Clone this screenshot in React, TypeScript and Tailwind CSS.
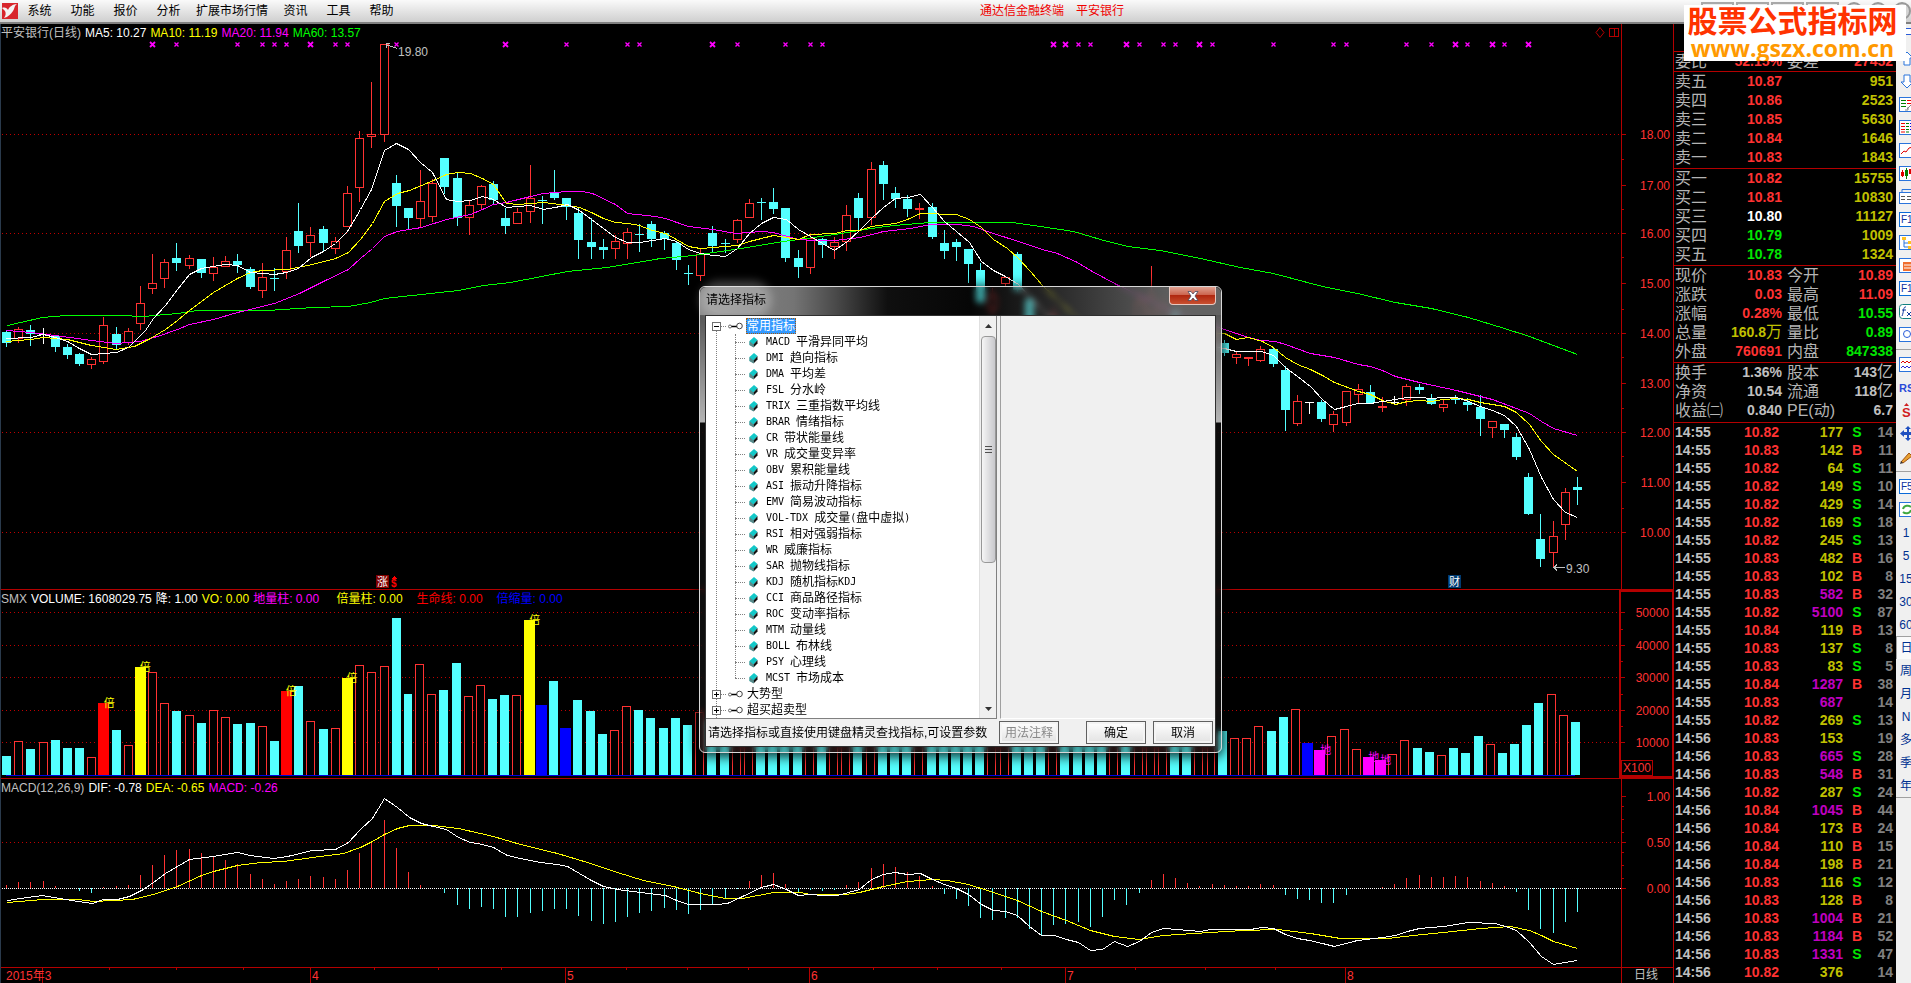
import React from "react";

type Candle = [string, number, number, number, number];

const cx = (i: number) => Math.round(6 + i * 12.178);

// kind, high, body top, body bottom, low
const candles: Candle[] = [
  ["D", 330, 332, 343, 346], ["U", 327, 329, 338, 342], ["D", 325, 330, 334, 345], ["W", 328, 334, 334, 343],
  ["D", 335, 336, 347, 351], ["D", 344, 347, 355, 358], ["D", 353, 354, 364, 365], ["U", 357, 359, 364, 368],
  ["U", 317, 325, 361, 363], ["D", 327, 334, 345, 348], ["U", 328, 331, 342, 344], ["U", 286, 303, 323, 329],
  ["U", 254, 283, 288, 293], ["U", 259, 262, 278, 287], ["D", 243, 258, 263, 270], ["U", 255, 258, 265, 268],
  ["D", 259, 259, 273, 277], ["U", 257, 267, 273, 280], ["U", 256, 261, 266, 266], ["D", 254, 261, 265, 272],
  ["D", 267, 269, 287, 288], ["U", 263, 277, 290, 297], ["D", 268, 278, 278, 290], ["U", 237, 250, 271, 278],
  ["D", 203, 231, 246, 252], ["U", 227, 235, 242, 256], ["D", 226, 229, 243, 251], ["U", 237, 241, 248, 253],
  ["U", 186, 193, 226, 226], ["U", 131, 138, 187, 201], ["U", 82, 134, 136, 147], ["U", 44, 44, 134, 141],
  ["D", 175, 183, 206, 226], ["D", 208, 208, 218, 228], ["U", 170, 201, 218, 227], ["U", 179, 183, 216, 221],
  ["D", 158, 158, 187, 193], ["D", 173, 178, 218, 225], ["U", 200, 205, 217, 234], ["U", 185, 186, 204, 208],
  ["D", 181, 184, 200, 204], ["D", 208, 218, 226, 233], ["U", 208, 212, 223, 223], ["U", 165, 198, 211, 222],
  ["D", 196, 200, 200, 223], ["D", 170, 192, 198, 199], ["D", 198, 198, 207, 219], ["D", 208, 213, 240, 258],
  ["D", 218, 242, 247, 258], ["D", 239, 247, 250, 258], ["U", 235, 241, 248, 258], ["U", 228, 232, 243, 258],
  ["D", 224, 234, 234, 251], ["D", 221, 224, 239, 246], ["D", 231, 233, 239, 249], ["D", 241, 243, 260, 269],
  ["D", 265, 273, 273, 284], ["U", 248, 254, 275, 280], ["D", 226, 233, 246, 252], ["D", 239, 243, 243, 252],
  ["U", 219, 220, 239, 242], ["U", 199, 203, 217, 217], ["D", 198, 202, 202, 219], ["D", 188, 202, 209, 213],
  ["D", 208, 208, 258, 261], ["D", 250, 258, 267, 277], ["U", 234, 238, 267, 273], ["D", 238, 239, 245, 257],
  ["U", 237, 242, 246, 258], ["U", 205, 215, 241, 250], ["D", 193, 198, 218, 229], ["U", 162, 169, 217, 224],
  ["D", 161, 165, 184, 199], ["D", 187, 193, 199, 207], ["D", 195, 199, 209, 216], ["U", 203, 208, 209, 218],
  ["D", 203, 207, 237, 238], ["D", 230, 243, 251, 258], ["D", 239, 242, 247, 260], ["D", 249, 249, 264, 282],
  ["D", 263, 270, 302, 304], ["U", 288, 296, 308, 316], ["U", 277, 277, 283, 285], ["D", 252, 254, 290, 292],
  ["D", 296, 299, 330, 340], ["D", 330, 336, 362, 370], ["U", 308, 316, 350, 360], ["D", 318, 326, 340, 352],
  ["D", 336, 342, 366, 372], ["D", 350, 356, 382, 390], ["D", 358, 366, 384, 392], ["U", 330, 344, 370, 380],
  ["D", 320, 330, 348, 360], ["U", 292, 302, 330, 342], ["U", 266, 296, 312, 330], ["U", 296, 306, 320, 330],
  ["D", 306, 310, 330, 336], ["D", 318, 322, 336, 344], ["U", 322, 330, 344, 350], ["U", 326, 332, 346, 352],
  ["D", 340, 343, 353, 355], ["U", 351, 354, 357, 363], ["U", 357, 357, 358, 365], ["U", 346, 349, 360, 361],
  ["D", 347, 349, 364, 366], ["D", 366, 370, 410, 430], ["U", 395, 401, 423, 425], ["W", 402, 402, 402, 413],
  ["D", 400, 402, 419, 421], ["U", 411, 414, 424, 431], ["U", 391, 391, 422, 425], ["U", 384, 389, 394, 403],
  ["D", 385, 392, 403, 403], ["U", 397, 406, 407, 411], ["W", 396, 402, 402, 404], ["U", 384, 386, 399, 405],
  ["D", 384, 387, 390, 393], ["D", 394, 399, 404, 404], ["U", 400, 404, 407, 411], ["D", 395, 398, 400, 403],
  ["D", 398, 402, 405, 410], ["D", 395, 407, 419, 435], ["U", 421, 421, 427, 437], ["D", 424, 424, 430, 437],
  ["D", 433, 437, 457, 459], ["D", 473, 477, 514, 514], ["D", 514, 539, 559, 566], ["U", 521, 536, 552, 566],
  ["U", 488, 492, 524, 539], ["D", 477, 487, 490, 504],
];

const volumeTops =
  "D756 U741 D749 U742 D740 D748 D748 U757 R703 D730 U745 Y667 U672 U703 D711 U715 D723 U710 U717 D724 D723 U726 D741 R691 D686 U721 D729 U728 Y678 U665 U672 U666 D618 D694 U664 U694 D690 D663 U696 U685 D699 D695 U695 Y620 B705 D681 B728 D700 D711 D734 U730 U706 D710 D718 D728 D718 D725 U712 D720 D728 U716 U712 D722 D718 D710 D720 U716 D722 U718 U708 D702 U690 D700 D712 D716 U722 D704 D716 D722 D718 D708 U712 U716 D704 D716 D708 U698 D702 D706 D712 D704 U700 D712 U708 U704 U712 D720 D726 U728 U734 D731 U738 U738 U726 D731 D717 U709 B743 M750 U736 U729 U749 M757 M760 U754 U740 D748 D752 U755 D748 D753 D736 U744 D753 D744 D725 D703 U694 U715 D722".split(
    " "
  );

const macdBars = [
  3, 6, 6, 7, 2, 0, -3, -5, 1, 2, 3, 13, 23, 33, 38, 39, 35, 31, 28, 24, 14, 9, 4, 7, 9, 12, 11, 9, 18, 35, 45, 68, 40, 16, 3,
  0, -5, -17, -21, -19, -21, -29, -29, -25, -23, -21, -21, -28, -33, -36, -34, -29, -25, -23, -20, -22, -26, -22, -16, -11,
  -1, 7, 13, 15, 4, -4, -2, -3, -2, 3, 6, 20, 24, 21, 16, 12, 2, -6, -11, -18, -30, -32, -30, -30, -41, -47, -37, -36, -34,
  -39, -29, -12, -17, -5, 8, 14, 10, 5, 2, 4, 3, 2, 2, 4, 3, -7, -11, -12, -15, -15, -7, 0, 0, 1, 4, 10, 13, 11, 11, 12, 11,
  7, 5, 2, -4, -22, -41, -45, -34, -24,
];

const ma5 =
  "6,338 30,337 43,334 55,337 67,341 79,348 91,354 104,353 116,352 128,347 145,330 153,318 165,305 177,289 189,274 201,268 213,266 225,264 237,265 250,272 262,273 274,274 286,272 298,268 311,257 323,251 335,243 347,231 360,209 371,189 384,150 396,143 408,149 420,162 432,172 446,199 457,201 470,200 482,196 493,199 506,207 518,206 530,205 543,209 555,207 567,204 579,210 591,219 603,228 615,237 627,242 639,242 652,240 665,238 676,241 688,249 700,253 713,255 725,256 737,248 749,233 761,223 773,217 786,219 798,229 810,236 822,243 834,250 847,241 859,230 871,218 883,207 895,198 907,197 920,194 932,207 944,221 956,231 969,242 981,261 993,270 1005,276 1018,284 1042,310 1100,365 1150,335 1224,348 1236,351 1261,351 1273,355 1285,367 1297,376 1310,386 1322,399 1334,409 1346,406 1357,403 1370,403 1382,401 1395,399 1407,397 1419,397 1431,398 1443,397 1456,397 1468,401 1480,406 1492,410 1504,415 1516,426 1529,449 1541,477 1553,499 1565,512 1577,517";
const ma10 =
  "6,341 30,339 43,337 67,339 91,345 116,349 134,346 150,338 165,329 177,320 189,310 201,301 213,292 225,285 237,278 250,272 262,270 287,269 312,264 335,258 348,252 360,239 372,223 384,201 397,193 409,190 421,185 433,180 446,174 458,172 470,173 482,178 493,184 506,203 518,204 530,203 543,202 567,205 579,207 591,212 603,218 615,222 627,223 639,225 652,230 665,233 676,239 688,246 700,248 713,247 737,245 749,241 773,235 786,237 798,239 810,234 834,233 847,230 859,230 871,226 895,223 907,219 920,213 956,214 969,219 981,227 993,239 1007,248 1018,258 1030,271 1042,285 1090,330 1224,333 1236,339 1248,337 1262,341 1273,347 1285,357 1297,364 1310,369 1322,375 1334,382 1358,391 1370,394 1382,400 1395,404 1407,401 1419,400 1431,401 1443,399 1456,398 1468,399 1480,402 1504,406 1516,412 1529,424 1541,441 1553,454 1577,471";
const ma20 =
  "6,330 30,332 55,335 91,340 116,343 140,341 160,335 177,329 189,324 213,319 237,312 274,303 299,293 323,281 348,269 360,258 372,248 384,236 397,231 421,227 446,219 470,214 482,209 493,204 506,202 530,196 543,193 567,191 582,191 592,193 615,204 627,213 655,216 665,218 688,226 713,229 735,233 761,231 773,232 798,239 813,240 834,240 860,237 883,231 910,228 930,224 957,224 973,226 993,233 1018,241 1042,249 1057,253 1077,262 1090,270 1116,284 1170,310 1224,329 1248,337 1261,340 1275,341 1285,344 1310,353 1334,357 1358,364 1370,366 1382,370 1395,376 1419,382 1456,390 1480,396 1492,399 1516,408 1529,413 1541,421 1553,428 1577,435";
const ma60 =
  "7,325 20,322 42,317 65,315 120,315 143,316 177,313 197,310 267,310 313,307 348,306 370,302 384,298 430,293 458,290 483,285 510,282 567,271 607,267 660,258 693,255 747,247 783,241 813,237 834,234 859,230 871,228 893,225 930,222 1012,222 1040,226 1073,231 1100,239 1127,246 1160,250 1200,258 1240,267 1273,273 1322,286 1357,293 1395,302 1431,308 1468,317 1504,328 1529,336 1553,345 1577,354";
const dif =
  "7,900 27,897 42,895 65,899 78,901 92,903 103,899 117,899 129,896 143,889 153,882 165,873 177,866 189,859 213,856 237,852 250,855 273,858 287,856 312,850 335,849 348,842 360,829 372,818 384,798 397,807 409,817 421,823 433,826 446,829 458,837 470,842 482,844 493,847 507,855 520,858 540,862 557,864 567,866 579,873 591,880 603,886 617,889 640,892 665,895 676,900 688,904 717,904 727,903 740,897 761,887 773,884 786,889 798,895 810,894 823,895 837,895 859,889 871,879 883,874 895,872 907,874 920,873 932,879 944,884 956,888 968,894 981,904 993,910 1005,911 1017,915 1029,926 1041,935 1054,935 1066,939 1078,942 1090,950 1102,949 1114,941 1127,946 1139,941 1151,932 1163,928 1177,929 1200,931 1210,929 1250,929 1262,927 1273,928 1285,934 1297,938 1309,940 1322,943 1334,946 1357,940 1382,937 1395,935 1407,931 1419,928 1443,926 1468,922 1495,923 1508,927 1516,930 1529,942 1541,956 1553,964 1577,960";
const dea =
  "7,902 42,899 78,899 93,901 132,899 153,894 177,886 201,875 213,871 237,865 260,862 283,861 312,857 343,853 360,847 372,841 384,834 397,828 409,825 433,825 458,828 480,833 493,836 520,844 557,853 587,862 617,872 643,880 673,886 700,893 725,898 742,898 773,892 800,892 810,894 845,894 859,892 883,886 907,881 932,879 947,880 968,884 993,892 1017,900 1041,911 1066,920 1090,930 1114,936 1139,939 1163,935 1193,933 1243,930 1277,929 1310,933 1340,938 1387,938 1413,935 1443,932 1480,928 1510,926 1529,930 1541,935 1553,941 1577,948";

const signals = [
  12, 14, 19, 21, 22, 23, 25, 27, 28, 32, 41, 46, 51, 52, 58, 60, 64, 66, 67, 86, 87, 88, 89, 92, 93, 95, 96, 98, 99, 104, 109,
  110, 115, 117, 119, 120, 122, 123, 125,
];
const strongSignals = [12, 25, 41, 58, 86, 87, 92, 98, 119, 122, 125];

const RED = "#ff3232";
const CYAN = "#54ffff";
const LINE = "#b40000";
const chartFont = "'Liberation Sans','Noto Sans CJK SC',sans-serif";

function Grid({ ys }: { ys: number[] }) {
  return (
    <>
      {ys.map((y) => (
        <line key={y} x1={2} x2={1621} y1={y + 0.5} y2={y + 0.5} stroke="#c00000" strokeDasharray="1 3" />
      ))}
    </>
  );
}

function Curve({ points, color }: { points: string; color: string }) {
  return <polyline points={points} transform="translate(0.5 0.5)" fill="none" stroke={color} strokeWidth={1} />;
}

function PriceChart() {
  return (
    <svg viewBox="1 41 1620 548" preserveAspectRatio="xMinYMin meet" className="block h-[548px] w-full" shapeRendering="crispEdges" fontFamily={chartFont}>
      <Grid ys={[134, 233, 333, 432, 532]} />
      {signals.map((i) => {
        const s = strongSignals.includes(i) ? 2.5 : 2;
        const x = cx(i) + 0.5;
        return (
          <path
            key={i}
            d={`M${x - s} ${44.5 - s}L${x + s} ${44.5 + s}M${x + s} ${44.5 - s}L${x - s} ${44.5 + s}`}
            stroke="#ff00ff"
            strokeWidth={strongSignals.includes(i) ? 1.8 : 1.3}
            shapeRendering="auto"
          />
        );
      })}
      {candles.map(([kind, high, top, bottom, low], i) => {
        const x = cx(i);
        const color = kind === "U" ? RED : kind === "D" ? CYAN : "#ffffff";
        const flat = bottom - top < 2;
        return (
          <g key={i}>
            <line x1={x + 0.5} x2={x + 0.5} y1={high} y2={low + 1} stroke={color} />
            {kind === "U" && !flat ? (
              <rect x={x - 3.5} y={top + 0.5} width={8} height={bottom - top} fill="#000" stroke={color} />
            ) : (
              <rect x={x - 4} y={top} width={9} height={Math.max(1, bottom - top + (kind === "U" ? 1 : 0))} fill={color} />
            )}
          </g>
        );
      })}
      <Curve points={ma60} color="#00ff00" />
      <Curve points={ma20} color="#ff00ff" />
      <Curve points={ma10} color="#ffff00" />
      <Curve points={ma5} color="#ffffff" />
      <g stroke="#c0c0c0" fill="none">
        <path d="M397 48.5L386 44.5M390 43.5H386V47.5" />
        <path d="M1565 567.5H1554M1557 564.5L1554 567.5L1557 570.5" />
      </g>
      <g fill="#c0c0c0" fontSize={12}>
        <text x={398} y={56}>19.80</text>
        <text x={1566} y={573}>9.30</text>
      </g>
      <rect x={376} y={575} width={13} height={13} fill="#800000" />
      <text x={377} y={586} fontSize={11} fill="#fff">涨</text>
      <text x={391} y={587} fontSize={10} fontWeight={700} fill="#ff0000">$</text>
      <path d="M394 576L397 579H391Z" fill="#ff0000" />
      <rect x={1448} y={575} width={13} height={13} fill="#003a70" />
      <text x={1449} y={586} fontSize={11} fill="#fff">财</text>
    </svg>
  );
}

const special: Record<string, string> = { R: "#ff0000", Y: "#ffff00", B: "#0000ff", M: "#ff00ff" };

function VolumeChart() {
  return (
    <svg viewBox="1 607 1620 171" preserveAspectRatio="xMinYMin meet" className="block h-[171px] w-full" shapeRendering="crispEdges" fontFamily={chartFont}>
      <Grid ys={[612, 645, 677, 710, 742]} />
      {volumeTops.map((v, i) => {
        const kind = v[0];
        const top = Number(v.slice(1));
        const x = cx(i);
        if (kind === "U") return <path key={i} d={`M${x - 3.5} 775V${top + 0.5}H${x + 4.5}V775`} fill="#000" stroke={RED} />;
        if (kind === "D") return <rect key={i} x={x - 4} y={top} width={9} height={775 - top} fill={CYAN} />;
        return <rect key={i} x={x - 5} y={top} width={11} height={775 - top} fill={special[kind]} />;
      })}
      <line x1={6} x2={1577} y1={775.5} y2={775.5} stroke="#0000e0" />
      <g fill="#ffff00" fontSize={11}>
        <text x={104} y={707}>倍</text>
        <text x={140} y={671}>倍</text>
        <text x={286} y={695}>倍</text>
        <text x={347} y={682}>倍</text>
        <text x={530} y={624}>倍</text>
      </g>
      <g fill="#ff00ff" fontSize={11}>
        <text x={1322} y={754}>地</text>
        <text x={1370} y={761}>地</text>
        <text x={1382} y={764}>地</text>
      </g>
    </svg>
  );
}

function MacdChart() {
  return (
    <svg viewBox="1 796 1620 171" preserveAspectRatio="xMinYMin meet" className="block h-[171px] w-full" shapeRendering="crispEdges">
      <Grid ys={[842]} />
      <line x1={2} x2={1621} y1={888.5} y2={888.5} stroke="#fff" strokeDasharray="1 1" />
      {macdBars.map((h, i) =>
        h === 0 ? null : (
          <line key={i} x1={cx(i) + 0.5} x2={cx(i) + 0.5} y1={888} y2={888 - h} stroke={h > 0 ? RED : CYAN} />
        )
      )}
      <Curve points={dea} color="#ffff00" />
      <Curve points={dif} color="#ffffff" />
    </svg>
  );
}

function Axis({ top, height, labels, minor }: { top: number; height: number; labels: [string, number][]; minor: number[] }) {
  return (
    <svg viewBox={`1622 ${top} 51 ${height}`} className="block h-full w-[51px]" shapeRendering="crispEdges" fontFamily={chartFont}>
      {labels.map(([t, y]) => (
        <g key={t}>
          <line x1={1622} x2={1626} y1={y + 0.5} y2={y + 0.5} stroke={LINE} />
          <text x={1670} y={y + 5} fontSize={12} textAnchor="end" fill={RED}>
            {t}
          </text>
        </g>
      ))}
      {minor.map((y) => (
        <line key={y} x1={1622} x2={1624} y1={y + 0.5} y2={y + 0.5} stroke={LINE} />
      ))}
    </svg>
  );
}

function DateAxis() {
  const months: [string, number][] = [["4", 310], ["5", 565], ["6", 809], ["7", 1065], ["8", 1345]];
  return (
    <svg viewBox="1 968 1620 15" preserveAspectRatio="xMinYMin meet" className="block h-[15px] w-full" shapeRendering="crispEdges" fontFamily={chartFont}>
      {[109, 176, 243, 374, 438, 501, 626, 687, 748, 873, 937, 1001, 1135, 1205, 1275].map((x) => (
        <line key={x} x1={x + 0.5} x2={x + 0.5} y1={968} y2={970} stroke={LINE} />
      ))}
      <line x1={42.5} x2={42.5} y1={968} y2={983} stroke={LINE} />
      <text x={6} y={980} fontSize={12} fill={RED}>2015年3</text>
      {months.map(([m, x]) => (
        <g key={m}>
          <line x1={x + 0.5} x2={x + 0.5} y1={968} y2={983} stroke={LINE} />
          <text x={x + 2} y={980} fontSize={12} fill={RED}>{m}</text>
        </g>
      ))}
    </svg>
  );
}

function Logo() {
  return (
    <svg viewBox="0 0 16 16" className="h-4 w-4">
      <rect width="16" height="16" fill="#d8262c" />
      <path d="M0 5C3 4 5 5 6 7C7 4 11 1 15 1C12 3 13 5 11 8C9 11 6 14 2 15C4 12 4 10 3 8C2 7 1 6 0 5Z" fill="#f4f4f4" />
    </svg>
  );
}

const menus = ["系统", "功能", "报价", "分析", "扩展市场行情", "资讯", "工具", "帮助"];

function MenuBar() {
  return (
    <header className="flex h-6 items-center border-b-2 border-[#808080] bg-gradient-to-b from-[#fafafa] to-[#cfcfcf] pl-0.5 text-xs text-black">
      <Logo />
      <nav className="flex">
        {menus.map((m) => (
          <button key={m} className="min-w-[43px] px-1.5 text-center leading-5">
            {m}
          </button>
        ))}
      </nav>
      <div className="flex flex-1 justify-center gap-3 text-[#f00000]">
        <span>通达信金融终端</span>
        <span>平安银行</span>
      </div>
      <div className="flex w-[210px] gap-0.5 self-start pt-0.5">
        {[0, 1, 2, 3].map((k) => (
          <span key={k} className="h-4 w-[35px] border-2 border-[#a8a8a8] bg-[#ececec]" />
        ))}
        {[0, 1, 2].map((k) => (
          <span key={k} className="ml-1 h-[18px] w-[18px] shrink-0 rounded-full border-2 border-[#999] bg-[#d4d4d4]" />
        ))}
      </div>
    </header>
  );
}

function Legend({ items, children }: { items: [string, string][]; children?: React.ReactNode }) {
  return (
    <div className="flex h-[17px] items-center gap-1 whitespace-pre pr-px text-xs">
      {items.map(([t, c]) => (
        <span key={t} className={c}>
          {t}
        </span>
      ))}
      {children}
    </div>
  );
}

function PaneTools() {
  return (
    <svg viewBox="0 0 25 11" className="ml-auto h-[11px] w-[25px]" fill="none" stroke={LINE}>
      <path d="M5 0.500L9 5.500L5 10.500L1 5.500Z" />
      <path d="M14.500 1.500H23.500V9.500H14.500ZM19.500 1.500V9.500" shapeRendering="crispEdges" />
    </svg>
  );
}

const K = {
  red: "text-[#ff3232]",
  green: "text-[#00e600]",
  yellow: "text-[#c0c000]",
  grey: "text-[#c0c0c0]",
  white: "text-white",
};

type QRow = [string, string, string, string, string, string];
const quoteSections: QRow[][] = [
  [["委比", "52.15%", K.red, "委差", "27452", K.red]],
  [
    ["卖五", "10.87", K.red, "", "951", K.yellow],
    ["卖四", "10.86", K.red, "", "2523", K.yellow],
    ["卖三", "10.85", K.red, "", "5630", K.yellow],
    ["卖二", "10.84", K.red, "", "1646", K.yellow],
    ["卖一", "10.83", K.red, "", "1843", K.yellow],
  ],
  [
    ["买一", "10.82", K.red, "", "15755", K.yellow],
    ["买二", "10.81", K.red, "", "10830", K.yellow],
    ["买三", "10.80", K.white, "", "11127", K.yellow],
    ["买四", "10.79", K.green, "", "1009", K.yellow],
    ["买五", "10.78", K.green, "", "1324", K.yellow],
  ],
  [
    ["现价", "10.83", K.red, "今开", "10.89", K.red],
    ["涨跌", "0.03", K.red, "最高", "11.09", K.red],
    ["涨幅", "0.28%", K.red, "最低", "10.55", K.green],
    ["总量", "160.8万", K.yellow, "量比", "0.89", K.green],
    ["外盘", "760691", K.red, "内盘", "847338", K.green],
  ],
  [
    ["换手", "1.36%", K.grey, "股本", "143亿", K.grey],
    ["净资", "10.54", K.grey, "流通", "118亿", K.grey],
    ["收益㈡", "0.840", K.grey, "PE(动)", "6.7", K.grey],
  ],
];
const sectionHeights = ["h-5", "h-[97px]", "h-[97px]", "h-[97px]", "h-[60px]"];

function Value({ text }: { text: string }) {
  const m = text.match(/^([\d.%]+)(.*)$/);
  return (
    <>
      {m ? m[1] : text}
      {m && m[2] ? <span className="text-base font-normal leading-none">{m[2]}</span> : null}
    </>
  );
}

const trades =
  "55|10.82|177|S|14 55|10.83|142|B|11 55|10.82|64|S|11 55|10.82|149|S|10 55|10.82|429|S|14 55|10.82|169|S|18 55|10.82|245|S|13 55|10.83|482|B|16 55|10.83|102|B|8 55|10.83|582|B|32 55|10.82|5100|S|87 55|10.84|119|B|13 55|10.83|137|S|8 55|10.83|83|S|5 55|10.84|1287|B|38 55|10.83|687||14 55|10.82|269|S|13 56|10.83|153||19 56|10.83|665|S|28 56|10.83|548|B|31 56|10.82|287|S|24 56|10.84|1045|B|44 56|10.84|173|B|24 56|10.84|110|B|15 56|10.84|198|B|21 56|10.83|116|S|12 56|10.83|128|B|8 56|10.83|1004|B|21 56|10.83|1184|B|52 56|10.83|1331|S|47 56|10.82|376||14"
    .split(" ")
    .map((r) => r.split("|"));

function QuotePanel() {
  return (
    <aside className="w-[223px] shrink-0 border-l border-[#b40000] bg-black pt-[27px] text-sm font-bold">
      {quoteSections.map((rows, s) => (
        <div key={s} className={`border-t border-[#b40000] pl-px pr-[3px] ${sectionHeights[s]}`}>
          {rows.map((r) => (
            <div key={r[0]} className="flex h-[19px] items-center whitespace-nowrap leading-[19px]">
              <span className="w-12 text-base font-normal leading-[19px] text-[#b4b4b4]">{r[0]}</span>
              <span className={`w-[59px] text-right ${r[2]}`}>
                <Value text={r[1]} />
              </span>
              <span className="w-12 pl-[5px] text-base font-normal leading-[19px] text-[#b4b4b4]">{r[3]}</span>
              <span className={`flex-1 text-right ${r[5]}`}>
                <Value text={r[4]} />
              </span>
            </div>
          ))}
        </div>
      ))}
      <table className="w-full table-fixed border-collapse border-t border-[#b40000]">
        <colgroup>
          <col className="w-[52px]" />
          <col className="w-[53px]" />
          <col className="w-16" />
          <col className="w-[28px]" />
          <col />
        </colgroup>
        <tbody>
          {trades.map(([t, p, v, d, n], i) => (
            <tr key={i} className="h-[18px] leading-[18px]">
              <td className="p-0 pl-px text-[#c0c0c0]">14:{t}</td>
              <td className="p-0 text-right text-[#ff3232]">{p}</td>
              <td className={`p-0 text-right ${Number(v) >= 500 ? "text-[#c000c0]" : "text-[#c0c000]"}`}>{v}</td>
              <td className={`p-0 text-center ${d === "S" ? "text-[#00e600]" : "text-[#ff3232]"}`}>{d}</td>
              <td className="p-0 pr-[3px] text-right text-[#808080]">{n}</td>
            </tr>
          ))}
        </tbody>
      </table>
    </aside>
  );
}

const frame = <rect x="0.5" y="0.5" width="20" height="14" fill="#fff" stroke="#2a74dc" />;
const toolIcons: [string, React.ReactNode][] = [
  ["窗口", <rect x="0.5" y="0.5" width="20" height="6" fill="#fff" stroke="#2a5cd8" />],
  ["上翻", <path d="M8 1L14 7H11V14H5V7H2Z" fill="#fff" stroke="#2a74dc" />],
  ["下翻", <path d="M8 14L14 8H11V1H5V8H2Z" fill="#fff" stroke="#2a74dc" />],
  ["报表", <>{frame}<path d="M2 3.5H7M2 6.5H7M2 9.5H7" stroke="#008000" /><path d="M8 3.5H13M8 6.5H13" stroke="#f00000" /><path d="M8 12L12 8M6 13H9V10" stroke="#888" fill="none" /></>],
  ["分栏", <>{frame}<path d="M2 3.5H6M2 6.5H6M2 9.5H6M2 12H6" stroke="#f00000" /><path d="M7 3.5H10M7 6.5H10M7 9.5H10M7 12H10" stroke="#008000" /><path d="M11 3.5H14M11 6.5H14M11 9.5H14" stroke="#0000e0" /></>],
  ["分时", <>{frame}<path d="M2 11L5 8L7 9L10 5L14 4" stroke="#e00000" fill="none" /></>],
  ["K线", <>{frame}<path d="M3.5 4V11" stroke="#e00000" /><rect x="2" y="6" width="3" height="4" fill="#e00000" /><path d="M7.500 2V13" stroke="#008000" /><rect x="6" y="4" width="3" height="6" fill="#008000" /><rect x="10" y="3" width="3" height="5" fill="#e00000" /></>],
  ["资料", <><path d="M3 3V0.5H20" stroke="#2a74dc" fill="none" /><rect x="0.5" y="3.500" width="20" height="11" fill="#fff" stroke="#2a74dc" /><path d="M2 7.500H6M8 7.500H12M2 10.500H6M8 10.500H12" stroke="#555" /></>],
  ["F10", "F10"],
  ["结构", <>{frame}<rect x="3" y="2" width="4" height="3" fill="#ffc020" /><path d="M5 5V12H10M5 8H9" stroke="#2a74dc" fill="none" /><rect x="9" y="6" width="4" height="3" fill="#ffc020" /><rect x="9" y="11" width="4" height="3" fill="#ffc020" /></>],
  ["公告", <>{frame}<rect x="4" y="4" width="9" height="9" fill="#f07030" /><path d="M5 7H12M5 10H12M7 2V4" stroke="#fff" /></>],
  ["F12", "F12"],
  ["公式", <><rect x="0.5" y="0.5" width="20" height="14" rx="3" fill="#fff" stroke="#108080" /><path d="M7 3C4 2 5 8 3 12M3 6H7M8 8L12 12M12 8L8 12" stroke="#103aa0" fill="none" /></>],
  ["搜索", <>{frame}<circle cx="8" cy="7" r="3.500" stroke="#2a5cd8" fill="none" /></>],
];
const toolIcons2: [string, React.ReactNode][] = [
  ["波浪", <>{frame}<path d="M2 6L4 4L6 6L8 4L10 6L12 4" stroke="#e00000" fill="none" /><path d="M2 11L4 9L6 11L8 9L10 11L12 9" stroke="#2a2ad8" fill="none" /></>],
  ["RSI", <text x="0" y="12" fontSize="11" fontWeight="700" fill="#2a4ad8">RS</text>],
  ["除权", <><text x="3" y="14" fontSize="13" fontWeight="700" fill="#d02020">S</text><path d="M7.500 0L10 3H5Z" fill="#d02020" /></>],
  ["移动", <path d="M9 0L12 3H10V6H13V4L16 7.500L13 11V9H10V12H12L9 15L6 12H8V9H5V11L1 7.500L5 4V6H8V3H6Z" fill="#2050c0" />],
  ["画线", <><path d="M2 13L10 4L13 7L4 14Z" fill="#e8a030" stroke="#a05010" /><path d="M1 15L2 12L4 14Z" fill="#333" /></>],
];
const toolIcons3: [string, React.ReactNode][] = [
  ["F5", "F5"],
  ["刷新", <>{frame}<path d="M4 7C5 3 10 3 12 5M12 8C11 12 6 12 4 10" stroke="#40a840" strokeWidth="2" fill="none" /></>],
];
const periods = ["1", "5", "15", "30", "60", "日", "周", "月", "N", "多", "季", "年"];

function ToolButton({ name, icon }: { name: string; icon: React.ReactNode }) {
  return (
    <button aria-label={name} className="flex h-[23px] w-6 shrink-0 items-center pl-[3px]">
      {typeof icon === "string" ? (
        <span className="h-[15px] w-[21px] shrink-0 border border-[#0a6ad8] bg-white pl-px text-left text-[10px] leading-[13px] text-[#1030a0]">
          {icon}
        </span>
      ) : (
        <svg viewBox="0 0 21 15" className="h-[15px] w-[21px] shrink-0">
          {icon}
        </svg>
      )}
    </button>
  );
}

function ToolStrip() {
  return (
    <div className="flex w-[15px] shrink-0 flex-col overflow-hidden bg-[#f0f0f0] text-xs text-[#003090]">
      {toolIcons.map(([n, i]) => <ToolButton key={n} name={n} icon={i} />)}
      <div className="my-[3px] h-px bg-[#a0a0a0]" />
      {toolIcons2.map(([n, i]) => <ToolButton key={n} name={n} icon={i} />)}
      <div className="my-[3px] h-px bg-[#a0a0a0]" />
      {toolIcons3.map(([n, i]) => <ToolButton key={n} name={n} icon={i} />)}
      {periods.map((p) => (
        <button
          key={p}
          className={`h-[23px] w-[22px] shrink-0 pr-0.5 text-center leading-[22px] ${p === "日" ? "border-l border-t border-[#a0a0a0] bg-[#fafafa]" : ""}`}
        >
          {p}
        </button>
      ))}
      <div className="h-px bg-[#a0a0a0]" />
    </div>
  );
}

const indicators: [string, string][] = [
  ["MACD", "平滑异同平均"], ["DMI", "趋向指标"], ["DMA", "平均差"], ["FSL", "分水岭"], ["TRIX", "三重指数平均线"],
  ["BRAR", "情绪指标"], ["CR", "带状能量线"], ["VR", "成交量变异率"], ["OBV", "累积能量线"], ["ASI", "振动升降指标"],
  ["EMV", "简易波动指标"], ["VOL-TDX", "成交量(盘中虚拟)"], ["RSI", "相对强弱指标"], ["WR", "威廉指标"], ["SAR", "抛物线指标"],
  ["KDJ", "随机指标KDJ"], ["CCI", "商品路径指标"], ["ROC", "变动率指标"], ["MTM", "动量线"], ["BOLL", "布林线"],
  ["PSY", "心理线"], ["MCST", "市场成本"],
];

function HalfWidth({ text }: { text: string }) {
  return (
    <>
      {text.split(/([ -~]+)/).filter(Boolean).map((part, i) =>
        /[ -~]/.test(part) ? (
          <span key={i} className="font-['DejaVu_Sans_Mono',monospace] text-[10px]">{part}</span>
        ) : (
          <span key={i}>{part}</span>
        )
      )}
    </>
  );
}

function KeyIcon() {
  return (
    <svg viewBox="0 0 15 9" className="h-[9px] w-[15px]" fill="none">
      <circle cx="2" cy="4.500" r="1.500" stroke="#666" />
      <path d="M3.500 4.500H9" stroke="#000" strokeWidth="1.500" />
      <circle cx="11.500" cy="4" r="2.800" stroke="#444" />
    </svg>
  );
}

function BookIcon() {
  return (
    <svg viewBox="0 0 9 11" className="h-[11px] w-[9px]">
      <path d="M0.500 4L5 0L8.500 3L4.500 7.500V10L0.500 8Z" fill="#12c8c8" />
      <path d="M4.500 7.500L8.500 3V6.500L4.500 10.500Z" fill="#111" />
      <path d="M0.500 4V8L4.500 10.500V7.500Z" fill="#5a8a8a" />
    </svg>
  );
}

function GroupRow({ label, open }: { label: string; open?: boolean }) {
  return (
    <li className="flex h-4 items-center">
      <span className="relative z-10 flex h-[9px] w-[9px] items-center justify-center border border-[#707070] bg-white">
        <span className="h-px w-[5px] bg-black" />
        {!open && <span className="absolute h-[5px] w-px bg-black" />}
      </span>
      <span className="mr-0.5 w-[5px] border-t border-dotted border-[#808080]" />
      <KeyIcon />
      <button
        className={
          open
            ? "ml-[3px] bg-[#3399ff] px-px leading-4 text-white outline-1 -outline-offset-1 outline-dotted outline-[#a05a10]"
            : "ml-[3px] px-px leading-4"
        }
      >
        {label}
      </button>
    </li>
  );
}

const dialogButton =
  "h-[23px] w-[60px] border border-[#606060] bg-gradient-to-b from-white to-[#e2e2e2] text-center leading-5 shadow-[inset_0_0_0_2px_#f4f4f4]";

function IndicatorDialog() {
  return (
    <section
      role="dialog"
      aria-label="请选择指标"
      className="absolute left-[699px] top-[286px] flex h-[467px] w-[523px] flex-col rounded-md border border-[#d8d8d8] bg-[linear-gradient(to_bottom,transparent_28px,#6a6a6ad0_28px,#c8c8c8e6_135px,#18181880_136px,#30303050_100%)] px-[5px] pb-[5px] text-xs text-black shadow-[0_2px_12px_2px_rgba(0,0,0,0.8)] backdrop-blur-[3px]"
    >
      <div className="-mx-[5px] flex h-7 shrink-0 items-start justify-between rounded-t-md bg-[linear-gradient(to_right,#8a8a8a_0%,#747474_18%,#4a4a4a_26%,#101010f0_36%,#10101060_52%,#50505090_70%,#707070e0_92%)] pl-1.5 pr-[5px]">
        <h2 className="rounded-full bg-white/25 leading-[26px] text-black shadow-[0_0_8px_6px_rgba(255,255,255,0.25)]">请选择指标</h2>
        <button
          aria-label="关闭"
          className="flex h-[18px] w-[47px] items-center justify-center rounded-b border border-t-0 border-[#e8c8c0] bg-[linear-gradient(to_bottom,#e0a090_0%,#cc6650_45%,#b02810_50%,#c85030_100%)]"
        >
          <svg viewBox="0 0 12 10" className="h-[10px] w-3">
            <path d="M1 0.500H4L6 3L8 0.500H11L8 5L11 9.500H8L6 7L4 9.500H1L4 5Z" fill="#fff" stroke="#4a4a60" strokeWidth="0.800" />
          </svg>
        </button>
      </div>
      <div className="flex min-h-0 flex-1 flex-col border border-[#303030] bg-[#f0f0f0]">
        <div className="flex min-h-0 flex-1 gap-[3px]">
          <div className="flex w-[291px] border-b border-r border-[#808080] bg-white">
            <ul className="relative min-w-0 flex-1 pl-[6px] pt-0.5">
              <li aria-hidden className="absolute bottom-0 left-[10px] top-3 border-l border-dotted border-[#808080]" />
              <GroupRow label="常用指标" open />
              <li>
                <ul className="relative ml-[23px]">
                  <li aria-hidden className="absolute bottom-2 left-0 top-0 border-l border-dotted border-[#808080]" />
                  {indicators.map(([code, name]) => (
                    <li key={code} className="flex h-4 items-center whitespace-pre leading-4">
                      <span className="w-[10px] border-t border-dotted border-[#808080]" />
                      <span className="ml-1 mr-2">
                        <BookIcon />
                      </span>
                      <HalfWidth text={code + " " + name} />
                    </li>
                  ))}
                </ul>
              </li>
              <GroupRow label="大势型" />
              <GroupRow label="超买超卖型" />
            </ul>
            <div className="flex w-[17px] flex-col items-center border-l border-[#e0e0e0] bg-[#f0f0f0]">
              <svg viewBox="0 0 7 4" className="mb-[8px] mt-[8px] h-1 w-[7px] shrink-0">
                <path d="M0 4L3.500 0L7 4Z" fill="#333" />
              </svg>
              <div className="flex h-[227px] w-[15px] shrink-0 flex-col items-center justify-center gap-0.5 rounded-sm border border-[#989898] bg-gradient-to-r from-[#f6f6f6] to-[#c8c8cc]">
                <span className="h-px w-[7px] bg-[#505050]" />
                <span className="h-px w-[7px] bg-[#505050]" />
                <span className="h-px w-[7px] bg-[#505050]" />
              </div>
              <svg viewBox="0 0 7 4" className="mb-[7px] mt-auto h-1 w-[7px] shrink-0">
                <path d="M0 0L3.500 4L7 0Z" fill="#333" />
              </svg>
            </div>
          </div>
          <div className="flex-1 border-b border-l border-b-white border-l-[#a0a0a0]" />
        </div>
        <footer className="flex h-[27px] shrink-0 items-center pl-0.5 pr-0.5">
          <p className="flex-1 whitespace-nowrap">请选择指标或直接使用键盘精灵查找指标,可设置参数</p>
          <button className={`${dialogButton} mr-[27px] text-[#888]`} disabled>用法注释</button>
          <button className={`${dialogButton} mr-[7px]`}>确定</button>
          <button className={dialogButton}>取消</button>
        </footer>
      </div>
    </section>
  );
}

function Watermark() {
  return (
    <div className="absolute right-[5px] top-[5px] flex h-14 w-[222px] flex-col items-center overflow-hidden bg-white pr-[5px] font-bold">
      <span className="text-[30px] leading-[34px] text-[#ff3300]">股票公式指标网</span>
      <span className="font-['Open_Sans','Noto_Sans',sans-serif] text-[23px] leading-[18px] text-[#ff9900]">www.gszx.com.cn</span>
    </div>
  );
}

export default function App() {
  return (
    <div className="relative flex min-h-screen flex-col overflow-hidden bg-black font-['Liberation_Sans','Noto_Sans_CJK_SC',sans-serif]">
      <MenuBar />
      <main className="flex flex-1">
        <div className="flex min-w-0 flex-1 flex-col border-l border-[#2a3a4c]">
          <div className="flex h-[566px] border-b border-[#b40000]">
            <div className="min-w-0 flex-1 border-r border-[#b40000]">
              <Legend
                items={[
                  ["平安银行(日线)", "text-[#c0c0c0]"],
                  ["MA5: 10.27", "text-white"],
                  ["MA10: 11.19", "text-[#ffff00]"],
                  ["MA20: 11.94", "text-[#ff00ff]"],
                  ["MA60: 13.57", "text-[#00ff00]"],
                ]}
              >
                <PaneTools />
              </Legend>
              <PriceChart />
            </div>
            <Axis
              top={24}
              height={565}
              labels={[["18.00", 134], ["17.00", 185], ["16.00", 233], ["15.00", 283], ["14.00", 333], ["13.00", 383], ["12.00", 432], ["11.00", 482], ["10.00", 532]]}
              minor={[159, 209, 257, 309, 357, 408, 456, 508]}
            />
          </div>
          <div className="flex h-[189px] border-b border-[#b40000]">
            <div className="min-w-0 flex-1">
              <Legend
                items={[
                  ["SMX", "text-[#c0c0c0]"],
                  ["VOLUME: 1608029.75", "text-white"],
                  ["降: 1.00", "text-white"],
                  ["VO: 0.00", "text-[#ffff00]"],
                  ["地量柱: 0.00", "text-[#ff00ff]"],
                  ["    倍量柱: 0.00", "text-[#ffff00]"],
                  ["   生命线: 0.00", "text-[#ff0000]"],
                  ["   倍缩量: 0.00", "text-[#0000ff]"],
                ]}
              />
              <VolumeChart />
            </div>
            <div className="relative border-2 border-r border-[#b40000]">
              <Axis
                top={592}
                height={184}
                labels={[["50000", 612], ["40000", 645], ["30000", 677], ["20000", 710], ["10000", 742]]}
                minor={[629, 661, 694, 726]}
              />
              <span className="absolute bottom-0 left-0 border border-[#b40000] px-px text-xs leading-[14px] text-[#ff3232]">X100</span>
            </div>
          </div>
          <div className="flex h-[189px] border-b border-[#b40000]">
            <div className="min-w-0 flex-1 border-r border-[#b40000]">
              <Legend
                items={[
                  ["MACD(12,26,9)", "text-[#c0c0c0]"],
                  ["DIF: -0.78", "text-white"],
                  ["DEA: -0.65", "text-[#ffff00]"],
                  ["MACD: -0.26", "text-[#ff00ff]"],
                ]}
              />
              <MacdChart />
            </div>
            <Axis
              top={779}
              height={188}
              labels={[["1.00", 796], ["0.50", 842], ["0.00", 888]]}
              minor={[806, 819, 832, 852, 865, 878]}
            />
          </div>
          <div className="flex h-[15px]">
            <div className="min-w-0 flex-1 border-r border-[#b40000]">
              <DateAxis />
            </div>
            <div className="w-[51px] pl-3 text-xs leading-[15px] text-[#c0c0c0]">日线</div>
          </div>
        </div>
        <QuotePanel />
        <ToolStrip />
      </main>
      <IndicatorDialog />
      <Watermark />
    </div>
  );
}
